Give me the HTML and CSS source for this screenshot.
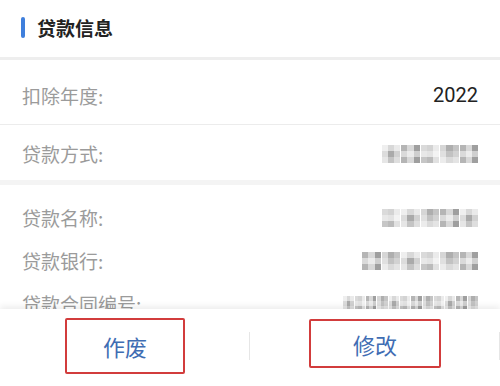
FILE: index.html
```html
<!DOCTYPE html>
<html lang="zh">
<head>
<meta charset="utf-8">
<link rel="stylesheet" href="styles.css">
</head>
<body>
<div class="page">
  <main class="content">
    <div class="header">
      <span class="bar"></span>
      <span class="title">贷款信息</span>
    </div>
    <div class="row row-big">
      <span class="label">扣除年度:</span>
      <span class="value">2022</span>
    </div>
    <div class="row row-big row-last">
      <span class="label">贷款方式:</span>
      <span class="mosaic"><i class="c1"></i><i class="c2"></i><i class="c3"></i><i class="c4"></i><i class="c2"></i></span>
    </div>
    <div class="group">
      <div class="row row-small">
        <span class="label">贷款名称:</span>
        <span class="mosaic"><i class="c3"></i><i class="c1"></i><i class="c4"></i><i class="c2"></i><i class="c1"></i></span>
      </div>
      <div class="row row-small">
        <span class="label">贷款银行:</span>
        <span class="mosaic"><i class="c2"></i><i class="c4"></i><i class="c1"></i><i class="c3"></i><i class="c4"></i><i class="c2"></i></span>
      </div>
      <div class="row row-small">
        <span class="label">贷款合同编号:</span>
        <span class="mosaic mosaic-num"><i class="c1"></i><i class="c3"></i><i class="c2"></i><i class="c4"></i><i class="c1"></i><i class="c3"></i><i class="c2"></i><i class="c4"></i><i class="c3"></i><i class="c1"></i><i class="c2"></i><i class="c4"></i></span>
      </div>
    </div>
  </main>
  <footer class="footer">
    <div class="cell"><button class="btn btn-a">作废</button></div>
    <div class="cell"><button class="btn btn-b">修改</button></div>
  </footer>
</div>
</body>
</html>
```

FILE: styles.css
```css
* { box-sizing: border-box; }
html, body { margin: 0; padding: 0; background: #fff; }
body {
  font-family: "Noto Sans CJK SC", "Noto Sans", Roboto, sans-serif;
  width: 500px;
  height: 386px;
  overflow: hidden;
}
.page {
  height: 386px;
  display: flex;
  flex-direction: column;
}
.content {
  flex: 1;
  overflow: hidden;
}
.header {
  display: flex;
  align-items: center;
  padding-left: 21px;
  padding-bottom: 2px;
  gap: 12px;
  border-bottom: 3px solid #eeeeee;
  height: 60px;
}
.bar {
  width: 4px;
  height: 21px;
  border-radius: 2px;
  background: #3f7fdc;
}
.title {
  font-size: 19px;
  font-weight: 700;
  color: #222;
  line-height: 1;
}
.row {
  display: flex;
  align-items: center;
  justify-content: space-between;
  padding: 0 22px;
}
.row-big {
  height: 65px;
  padding-top: 6px;
  border-bottom: 1px solid #ececec;
}
.row-last {
  height: 60px;
  padding-top: 2px;
  border-bottom: 5px solid #f4f4f4;
}
.group { padding-top: 11px; }
.row-small { height: 43px; }
.label {
  font-size: 19px;
  color: #9b9b9b;
  line-height: 1;
}
.value {
  font-family: Roboto, "Noto Sans", sans-serif;
  font-size: 20px;
  color: #222;
  line-height: 1;
}
.mosaic {
  display: flex;
  gap: 1px;
  filter: blur(0.6px);
  opacity: 0.85;
}
.mosaic i {
  display: block;
  width: 18.5px;
  height: 18px;
}
.mosaic-num i {
  width: 10.3px;
  height: 15px;
}
.mosaic .c1 {
  background:
    linear-gradient(180deg, rgba(255,255,255,.55) 0 33%, transparent 33% 66%, rgba(255,255,255,.3) 66%),
    linear-gradient(90deg, #d6d6d6 0 33%, #9c9c9c 33% 66%, #c9c9c9 66%);
}
.mosaic .c2 {
  background:
    linear-gradient(180deg, transparent 0 33%, rgba(255,255,255,.5) 33% 66%, transparent 66%),
    linear-gradient(90deg, #a9a9a9 0 33%, #d2d2d2 33% 66%, #8f8f8f 66%);
}
.mosaic .c3 {
  background:
    linear-gradient(180deg, rgba(255,255,255,.35) 0 33%, rgba(255,255,255,.6) 33% 66%, transparent 66%),
    linear-gradient(90deg, #bdbdbd 0 33%, #b0b0b0 33% 66%, #dcdcdc 66%);
}
.mosaic .c4 {
  background:
    linear-gradient(180deg, transparent 0 33%, rgba(255,255,255,.25) 33% 66%, rgba(255,255,255,.55) 66%),
    linear-gradient(90deg, #cfcfcf 0 33%, #a0a0a0 33% 66%, #bababa 66%);
}
.footer {
  height: 77px;
  display: flex;
  background: #fff;
  position: relative;
  z-index: 1;
  box-shadow: 0 -3px 6px rgba(0,0,0,0.07);
}
.cell {
  width: 250px;
  flex: none;
  display: flex;
  align-items: center;
  justify-content: center;
  position: relative;
}
.cell::after {
  content: "";
  position: absolute;
  right: 0;
  top: 23px;
  width: 1px;
  height: 28px;
  background: #e6e6e6;
}
.btn {
  font-family: "Noto Sans CJK SC", sans-serif;
  font-size: 22px;
  color: #3f6db3;
  background: #fff;
  border: 2px solid #d23c3c;
  border-radius: 2px;
  padding: 0;
  line-height: 1;
}
.btn-a { width: 120px; height: 56px; margin-top: -3px; }
.btn-b { width: 132px; height: 49px; margin-top: -8px; }
```
